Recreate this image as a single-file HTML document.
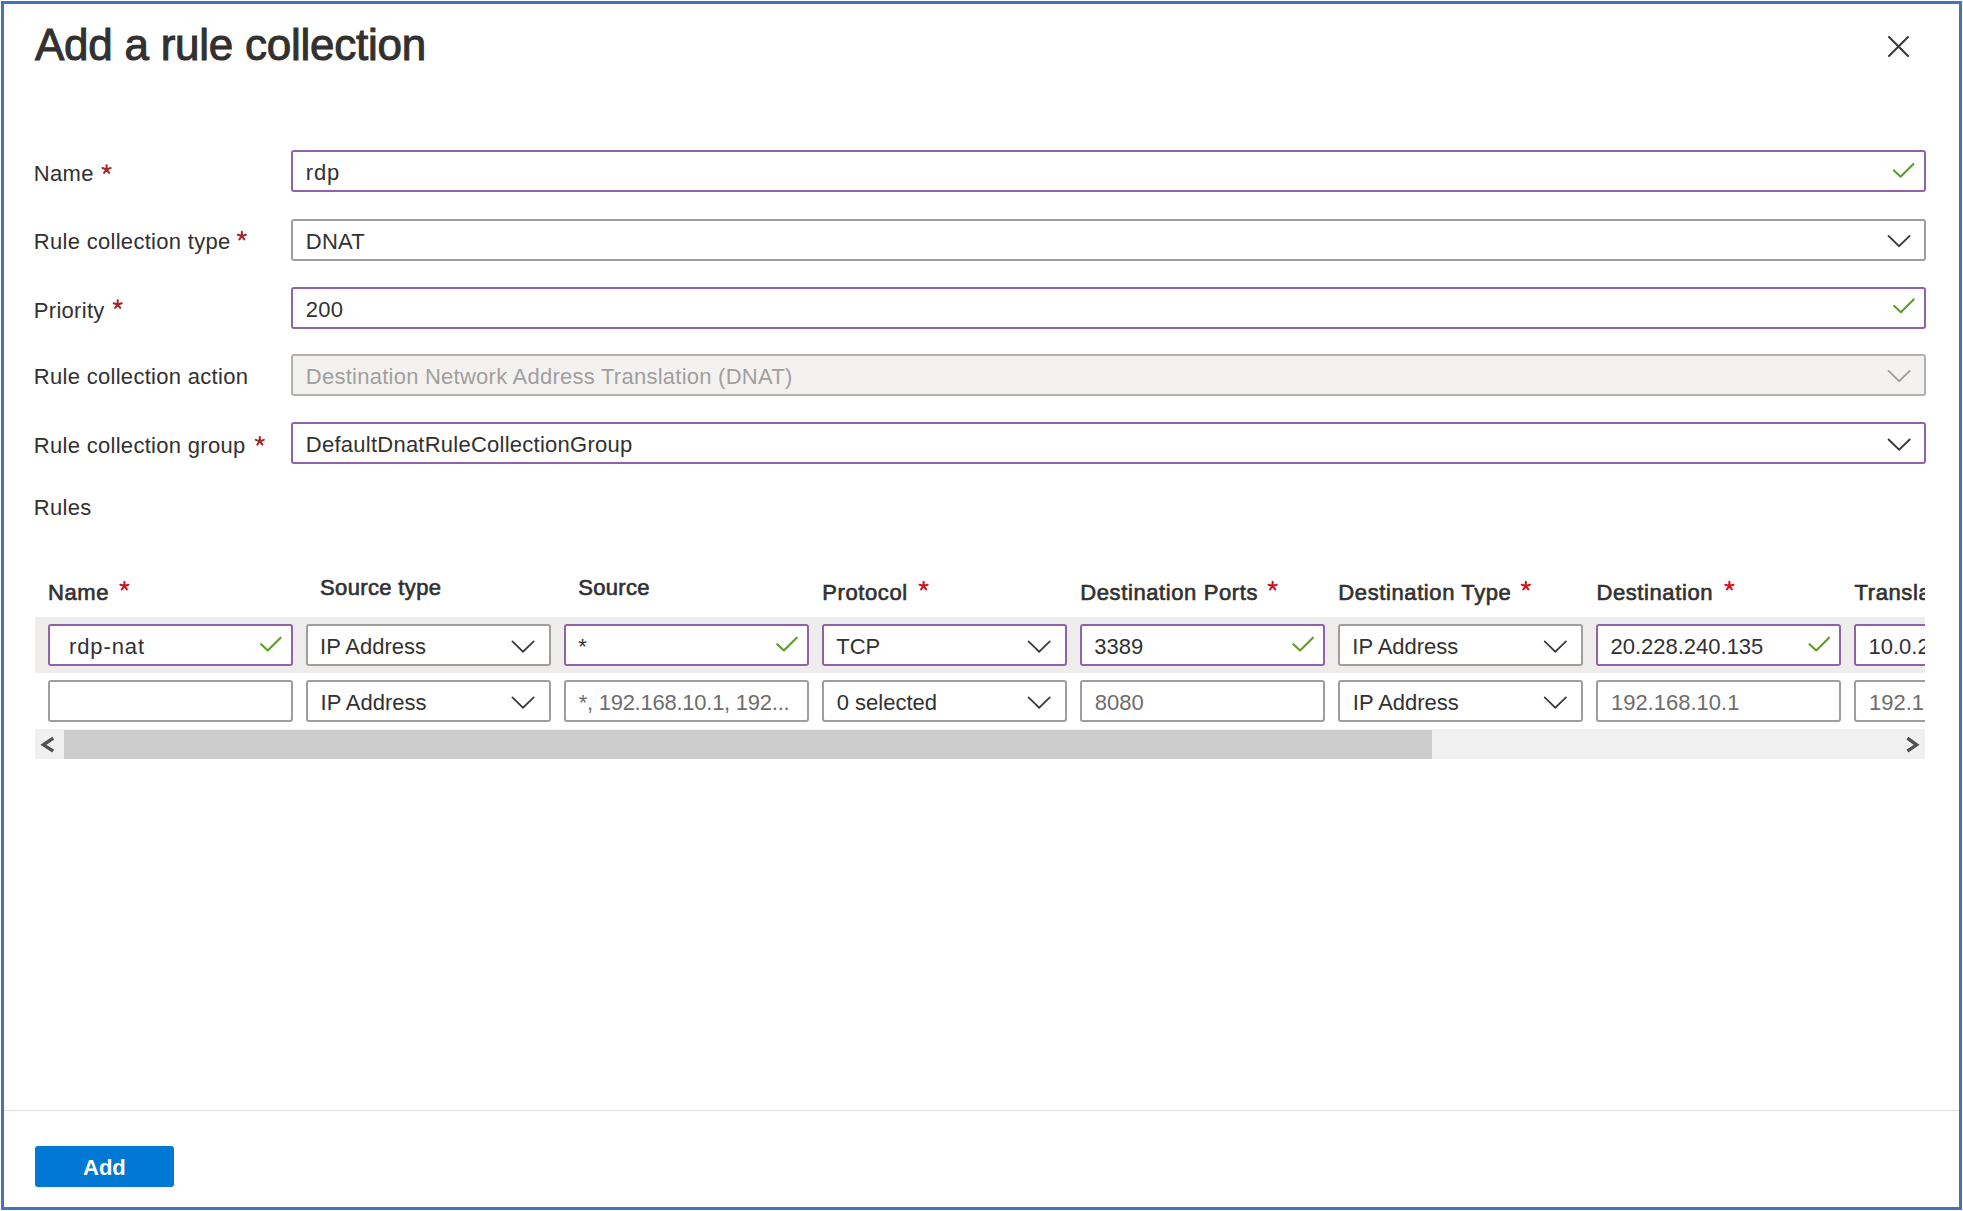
<!DOCTYPE html>
<html>
<head>
<meta charset="utf-8">
<style>
html,body{margin:0;padding:0;background:#fff;}
body{width:1963px;height:1211px;position:relative;overflow:hidden;font-family:"Liberation Sans",sans-serif;color:#323130;}
.frame{position:absolute;left:1px;top:1px;width:1961px;height:1209px;box-sizing:border-box;border:3px solid #4571bd;z-index:10;}
.t{position:absolute;white-space:nowrap;line-height:22px;font-size:22px;z-index:3;}
.inp{position:absolute;box-sizing:border-box;height:42px;border:2px solid #a09e9c;border-radius:3px;background:#fff;}
.pur{border-color:#9161ac;}
.dis{background:#f3f2f1;border-color:#b3b1af;}
.hdr{font-size:22px;-webkit-text-stroke:0.65px #323130;letter-spacing:0.6px;}
.sep{position:absolute;left:4px;width:1955px;top:1110px;height:1px;background:#e1dfdd;}
.btn{position:absolute;left:35px;top:1146px;width:139px;height:41px;background:#0078d4;border-radius:3px;}
</style>
</head>
<body>
<div class="frame"></div>
<div class="t" style="left:35px;top:23px;font-size:44px;line-height:44px;-webkit-text-stroke:1px #323130;letter-spacing:-0.25px;">Add a rule collection</div><div class="t" style="left:33.8px;top:163px;letter-spacing:0.3px;">Name</div><div class="t" style="left:33.8px;top:231px;letter-spacing:0.3px;">Rule collection type</div><div class="t" style="left:33.8px;top:300px;letter-spacing:0.3px;">Priority</div><div class="t" style="left:33.8px;top:366px;letter-spacing:0.3px;">Rule collection action</div><div class="t" style="left:33.8px;top:435px;letter-spacing:0.3px;">Rule collection group</div><div class="t" style="left:33.8px;top:497px;letter-spacing:0.3px;">Rules</div><div class="inp pur" style="left:291px;top:150px;width:1635px;"></div><div class="t" style="left:305.8px;top:162px;letter-spacing:0.25px;letter-spacing:0.8px;">rdp</div><div class="inp " style="left:291px;top:219px;width:1635px;"></div><div class="t" style="left:305.8px;top:231px;letter-spacing:0.25px;">DNAT</div><div class="inp pur" style="left:291px;top:287px;width:1635px;"></div><div class="t" style="left:305.8px;top:299px;letter-spacing:0.25px;">200</div><div class="inp dis" style="left:291px;top:354px;width:1635px;"></div><div class="t" style="left:305.8px;top:366px;letter-spacing:0.25px;color:#a19f9d;">Destination Network Address Translation (DNAT)</div><div class="inp pur" style="left:291px;top:422px;width:1635px;"></div><div class="t" style="left:305.8px;top:434px;letter-spacing:0.25px;">DefaultDnatRuleCollectionGroup</div>
<div style="position:absolute;left:0;top:0;width:1925px;height:1211px;overflow:hidden;"><div style="position:absolute;left:35px;top:617px;width:1890px;height:56px;background:#eeedec;"></div><div class="t hdr" style="left:48px;top:582.3px;">Name</div><div class="t hdr" style="left:320.07px;top:576.5px;letter-spacing:0.35px;">Source type</div><div class="t hdr" style="left:578.14px;top:576.5px;letter-spacing:0.35px;">Source</div><div class="t hdr" style="left:822.21px;top:582.3px;">Protocol</div><div class="t hdr" style="left:1080.28px;top:582.3px;">Destination Ports</div><div class="t hdr" style="left:1338.35px;top:582.3px;">Destination Type</div><div class="t hdr" style="left:1596.42px;top:582.3px;">Destination</div><div class="t hdr" style="left:1854.49px;top:582.3px;">Transla</div><div class="inp pur" style="left:48px;top:624px;width:245px;"></div><div class="t" style="left:69px;top:636px;letter-spacing:0.9px;">rdp-nat</div><div class="inp " style="left:48px;top:680px;width:245px;"></div><div class="t" style="left:62.5px;top:691.5px;"></div><div class="inp " style="left:306.07px;top:624px;width:245px;"></div><div class="t" style="left:320.07px;top:636px;">IP Address</div><div class="inp " style="left:306.07px;top:680px;width:245px;"></div><div class="t" style="left:320.57px;top:691.5px;">IP Address</div><div class="inp pur" style="left:564.14px;top:624px;width:245px;"></div><div class="t" style="left:578.14px;top:636px;">*</div><div class="inp " style="left:564.14px;top:680px;width:245px;"></div><div class="t" style="left:578.64px;top:691.5px;color:#6f6d6b;letter-spacing:-0.25px;">*, 192.168.10.1, 192...</div><div class="inp pur" style="left:822.21px;top:624px;width:245px;"></div><div class="t" style="left:836.21px;top:636px;">TCP</div><div class="inp " style="left:822.21px;top:680px;width:245px;"></div><div class="t" style="left:836.71px;top:691.5px;">0 selected</div><div class="inp pur" style="left:1080.28px;top:624px;width:245px;"></div><div class="t" style="left:1094.28px;top:636px;">3389</div><div class="inp " style="left:1080.28px;top:680px;width:245px;"></div><div class="t" style="left:1094.78px;top:691.5px;color:#6f6d6b;">8080</div><div class="inp " style="left:1338.35px;top:624px;width:245px;"></div><div class="t" style="left:1352.35px;top:636px;">IP Address</div><div class="inp " style="left:1338.35px;top:680px;width:245px;"></div><div class="t" style="left:1352.85px;top:691.5px;">IP Address</div><div class="inp pur" style="left:1596.42px;top:624px;width:245px;"></div><div class="t" style="left:1610.42px;top:636px;">20.228.240.135</div><div class="inp " style="left:1596.42px;top:680px;width:245px;"></div><div class="t" style="left:1610.92px;top:691.5px;color:#6f6d6b;">192.168.10.1</div><div class="inp pur" style="left:1854.49px;top:624px;width:245px;"></div><div class="t" style="left:1868.49px;top:636px;">10.0.2.4</div><div class="inp " style="left:1854.49px;top:680px;width:245px;"></div><div class="t" style="left:1868.99px;top:691.5px;color:#6f6d6b;">192.168.10.2</div><div style="position:absolute;left:35px;top:729px;width:1890px;height:30px;background:#f0f0f0;"></div><div style="position:absolute;left:64px;top:730px;width:1368px;height:29px;background:#cdcdcd;"></div></div>
<div class="sep"></div>
<div class="btn"></div>
<div class="t" style="left:83px;top:1156.5px;color:#fff;font-weight:bold;">Add</div>
<svg style="position:absolute;left:0;top:0;z-index:5" width="1963" height="1211" viewBox="0 0 1963 1211"><path d="M1889 37 L1908 56" stroke="#3b3a39" stroke-width="2.1" fill="none" stroke-linecap="round" stroke-linejoin="round"/><path d="M1908 37 L1889 56" stroke="#3b3a39" stroke-width="2.1" fill="none" stroke-linecap="round" stroke-linejoin="round"/><path d="M1893.9 170.4 L1900.6 176.7 L1913.4 163.9" stroke="#5c9e26" stroke-width="2.1" fill="none" stroke-linecap="round" stroke-linejoin="round"/><path d="M1888.5 235.9 L1899.05 246.1 L1909.6 235.9" stroke="#3b3a39" stroke-width="1.9" fill="none" stroke-linecap="round" stroke-linejoin="miter"/><path d="M1894.2 305.9 L1900.9 312.2 L1913.7 299.4" stroke="#5c9e26" stroke-width="2.1" fill="none" stroke-linecap="round" stroke-linejoin="round"/><path d="M1888.6 370.9 L1899.15 381.1 L1909.7 370.9" stroke="#a19f9d" stroke-width="1.9" fill="none" stroke-linecap="round" stroke-linejoin="miter"/><path d="M1888.6 439.5 L1899.15 449.7 L1909.7 439.5" stroke="#3b3a39" stroke-width="1.9" fill="none" stroke-linecap="round" stroke-linejoin="miter"/><path d="M106.6 169.4 L106.6 165.15 M106.6 169.4 L110.64 168.09 M106.6 169.4 L109.1 172.84 M106.6 169.4 L104.1 172.84 M106.6 169.4 L102.56 168.09 " stroke="#a4262c" stroke-width="2.05" fill="none" stroke-linecap="round"/><path d="M241.85 236 L241.85 231.75 M241.85 236 L245.89 234.69 M241.85 236 L244.35 239.44 M241.85 236 L239.35 239.44 M241.85 236 L237.81 234.69 " stroke="#a4262c" stroke-width="2.05" fill="none" stroke-linecap="round"/><path d="M117.7 304.5 L117.7 300.25 M117.7 304.5 L121.74 303.19 M117.7 304.5 L120.2 307.94 M117.7 304.5 L115.2 307.94 M117.7 304.5 L113.66 303.19 " stroke="#a4262c" stroke-width="2.05" fill="none" stroke-linecap="round"/><path d="M259.85 441.2 L259.85 436.95 M259.85 441.2 L263.89 439.89 M259.85 441.2 L262.35 444.64 M259.85 441.2 L257.35 444.64 M259.85 441.2 L255.81 439.89 " stroke="#a4262c" stroke-width="2.05" fill="none" stroke-linecap="round"/><path d="M124.4 586 L124.4 581.75 M124.4 586 L128.44 584.69 M124.4 586 L126.9 589.44 M124.4 586 L121.9 589.44 M124.4 586 L120.36 584.69 " stroke="#d4121f" stroke-width="2.05" fill="none" stroke-linecap="round"/><path d="M923.6 586 L923.6 581.75 M923.6 586 L927.64 584.69 M923.6 586 L926.1 589.44 M923.6 586 L921.1 589.44 M923.6 586 L919.56 584.69 " stroke="#d4121f" stroke-width="2.05" fill="none" stroke-linecap="round"/><path d="M1272.6 586 L1272.6 581.75 M1272.6 586 L1276.64 584.69 M1272.6 586 L1275.1 589.44 M1272.6 586 L1270.1 589.44 M1272.6 586 L1268.56 584.69 " stroke="#d4121f" stroke-width="2.05" fill="none" stroke-linecap="round"/><path d="M1525.8 586 L1525.8 581.75 M1525.8 586 L1529.84 584.69 M1525.8 586 L1528.3 589.44 M1525.8 586 L1523.3 589.44 M1525.8 586 L1521.76 584.69 " stroke="#d4121f" stroke-width="2.05" fill="none" stroke-linecap="round"/><path d="M1729.4 586 L1729.4 581.75 M1729.4 586 L1733.44 584.69 M1729.4 586 L1731.9 589.44 M1729.4 586 L1726.9 589.44 M1729.4 586 L1725.36 584.69 " stroke="#d4121f" stroke-width="2.05" fill="none" stroke-linecap="round"/><path d="M261.1 644.2 L267.8 650.5 L280.6 637.7" stroke="#5c9e26" stroke-width="2.1" fill="none" stroke-linecap="round" stroke-linejoin="round"/><path d="M512.37 641.3 L523.02 651.7 L533.67 641.3" stroke="#3b3a39" stroke-width="1.7" fill="none" stroke-linecap="round" stroke-linejoin="miter"/><path d="M512.37 697.3 L523.02 707.7 L533.67 697.3" stroke="#3b3a39" stroke-width="1.7" fill="none" stroke-linecap="round" stroke-linejoin="miter"/><path d="M777.24 644.2 L783.94 650.5 L796.74 637.7" stroke="#5c9e26" stroke-width="2.1" fill="none" stroke-linecap="round" stroke-linejoin="round"/><path d="M1028.51 641.3 L1039.16 651.7 L1049.81 641.3" stroke="#3b3a39" stroke-width="1.7" fill="none" stroke-linecap="round" stroke-linejoin="miter"/><path d="M1028.51 697.3 L1039.16 707.7 L1049.81 697.3" stroke="#3b3a39" stroke-width="1.7" fill="none" stroke-linecap="round" stroke-linejoin="miter"/><path d="M1293.38 644.2 L1300.08 650.5 L1312.88 637.7" stroke="#5c9e26" stroke-width="2.1" fill="none" stroke-linecap="round" stroke-linejoin="round"/><path d="M1544.65 641.3 L1555.3 651.7 L1565.95 641.3" stroke="#3b3a39" stroke-width="1.7" fill="none" stroke-linecap="round" stroke-linejoin="miter"/><path d="M1544.65 697.3 L1555.3 707.7 L1565.95 697.3" stroke="#3b3a39" stroke-width="1.7" fill="none" stroke-linecap="round" stroke-linejoin="miter"/><path d="M1809.52 644.2 L1816.22 650.5 L1829.02 637.7" stroke="#5c9e26" stroke-width="2.1" fill="none" stroke-linecap="round" stroke-linejoin="round"/><path d="M53.2 738.2 L43.4 744.8 L53.2 751.2" stroke="#505050" stroke-width="3.4" fill="none" stroke-linecap="butt" stroke-linejoin="miter"/><path d="M1907.4 738.2 L1916.6 744.8 L1907.4 751.2" stroke="#505050" stroke-width="3.4" fill="none" stroke-linecap="butt" stroke-linejoin="miter"/></svg>
</body>
</html>
